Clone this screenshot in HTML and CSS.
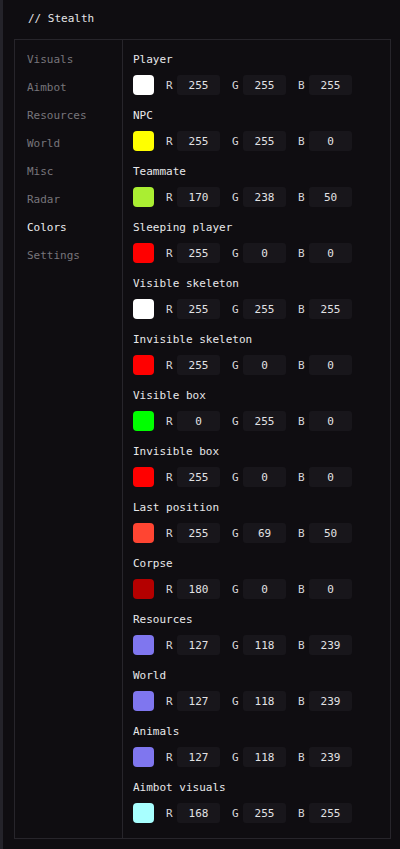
FILE: index.html
```html
<!DOCTYPE html>
<html>
<head>
<meta charset="utf-8">
<link rel="stylesheet" href="styles.css">
</head>
<body>
<div class="edge"></div>
<div class="window">
  <div class="title">// Stealth</div>
  <div class="panel">
    <nav class="sidebar">
      <div class="nav-item">Visuals</div>
      <div class="nav-item">Aimbot</div>
      <div class="nav-item">Resources</div>
      <div class="nav-item">World</div>
      <div class="nav-item">Misc</div>
      <div class="nav-item">Radar</div>
      <div class="nav-item active">Colors</div>
      <div class="nav-item">Settings</div>
    </nav>
    <main class="content">
      <div class="entry"><div class="label">Player</div><div class="controls"><span class="swatch" style="background:#ffffff"></span><span class="ch">R</span><span class="val">255</span><span class="ch">G</span><span class="val">255</span><span class="ch">B</span><span class="val">255</span></div></div>
      <div class="entry"><div class="label">NPC</div><div class="controls"><span class="swatch" style="background:#ffff00"></span><span class="ch">R</span><span class="val">255</span><span class="ch">G</span><span class="val">255</span><span class="ch">B</span><span class="val">0</span></div></div>
      <div class="entry"><div class="label">Teammate</div><div class="controls"><span class="swatch" style="background:#aaee32"></span><span class="ch">R</span><span class="val">170</span><span class="ch">G</span><span class="val">238</span><span class="ch">B</span><span class="val">50</span></div></div>
      <div class="entry"><div class="label">Sleeping player</div><div class="controls"><span class="swatch" style="background:#ff0000"></span><span class="ch">R</span><span class="val">255</span><span class="ch">G</span><span class="val">0</span><span class="ch">B</span><span class="val">0</span></div></div>
      <div class="entry"><div class="label">Visible skeleton</div><div class="controls"><span class="swatch" style="background:#ffffff"></span><span class="ch">R</span><span class="val">255</span><span class="ch">G</span><span class="val">255</span><span class="ch">B</span><span class="val">255</span></div></div>
      <div class="entry"><div class="label">Invisible skeleton</div><div class="controls"><span class="swatch" style="background:#ff0000"></span><span class="ch">R</span><span class="val">255</span><span class="ch">G</span><span class="val">0</span><span class="ch">B</span><span class="val">0</span></div></div>
      <div class="entry"><div class="label">Visible box</div><div class="controls"><span class="swatch" style="background:#00ff00"></span><span class="ch">R</span><span class="val">0</span><span class="ch">G</span><span class="val">255</span><span class="ch">B</span><span class="val">0</span></div></div>
      <div class="entry"><div class="label">Invisible box</div><div class="controls"><span class="swatch" style="background:#ff0000"></span><span class="ch">R</span><span class="val">255</span><span class="ch">G</span><span class="val">0</span><span class="ch">B</span><span class="val">0</span></div></div>
      <div class="entry"><div class="label">Last position</div><div class="controls"><span class="swatch" style="background:#ff4532"></span><span class="ch">R</span><span class="val">255</span><span class="ch">G</span><span class="val">69</span><span class="ch">B</span><span class="val">50</span></div></div>
      <div class="entry"><div class="label">Corpse</div><div class="controls"><span class="swatch" style="background:#b40000"></span><span class="ch">R</span><span class="val">180</span><span class="ch">G</span><span class="val">0</span><span class="ch">B</span><span class="val">0</span></div></div>
      <div class="entry"><div class="label">Resources</div><div class="controls"><span class="swatch" style="background:#7f76ef"></span><span class="ch">R</span><span class="val">127</span><span class="ch">G</span><span class="val">118</span><span class="ch">B</span><span class="val">239</span></div></div>
      <div class="entry"><div class="label">World</div><div class="controls"><span class="swatch" style="background:#7f76ef"></span><span class="ch">R</span><span class="val">127</span><span class="ch">G</span><span class="val">118</span><span class="ch">B</span><span class="val">239</span></div></div>
      <div class="entry"><div class="label">Animals</div><div class="controls"><span class="swatch" style="background:#7f76ef"></span><span class="ch">R</span><span class="val">127</span><span class="ch">G</span><span class="val">118</span><span class="ch">B</span><span class="val">239</span></div></div>
      <div class="entry"><div class="label">Aimbot visuals</div><div class="controls"><span class="swatch" style="background:#a8ffff"></span><span class="ch">R</span><span class="val">168</span><span class="ch">G</span><span class="val">255</span><span class="ch">B</span><span class="val">255</span></div></div>
    </main>
  </div>
</div>
</body>
</html>
```
FILE: styles.css
```css
html, body {
  margin: 0;
  padding: 0;
  background: #0f0d11;
  height: 849px;
  overflow: hidden;
}
body {
  display: flex;
  font-family: "DejaVu Sans Mono", "Liberation Mono", monospace;
  font-size: 11px;
  color: #e6e6e8;
}
.edge {
  width: 3px;
  height: 849px;
  background: #24232a;
  flex: none;
}
.window {
  flex: 1;
  display: flex;
  flex-direction: column;
  padding-left: 11px;
}
.title {
  height: 39px;
  line-height: 38px;
  padding-left: 14px;
  color: #e4e4e6;
}
.panel {
  width: 375px;
  height: 798px;
  border: 1px solid #27252b;
  display: flex;
}
.sidebar {
  width: 95px;
  border-right: 1px solid #27252b;
  padding: 6px 0 0 12px;
  flex: none;
}
.nav-item {
  height: 28px;
  line-height: 28px;
  color: #77757b;
}
.nav-item.active {
  color: #ececee;
}
.content {
  padding: 11px 0 0 10px;
  display: flex;
  flex-direction: column;
  gap: 12px;
}
.entry {
  display: flex;
  flex-direction: column;
  gap: 8px;
}
.label {
  height: 16px;
  line-height: 18px;
  color: #e8e8ea;
}
.controls {
  display: flex;
  align-items: center;
  height: 20px;
}
.swatch {
  width: 21px;
  height: 20px;
  border-radius: 4px;
  margin-right: 12px;
}
.ch {
  width: 10px;
  color: #d6d6da;
  margin-right: 1px;
}
.val {
  width: 43px;
  height: 20px;
  line-height: 21px;
  background: #18161b;
  border-radius: 3px;
  text-align: center;
  color: #e2e2e4;
  margin-right: 12px;
}
```
